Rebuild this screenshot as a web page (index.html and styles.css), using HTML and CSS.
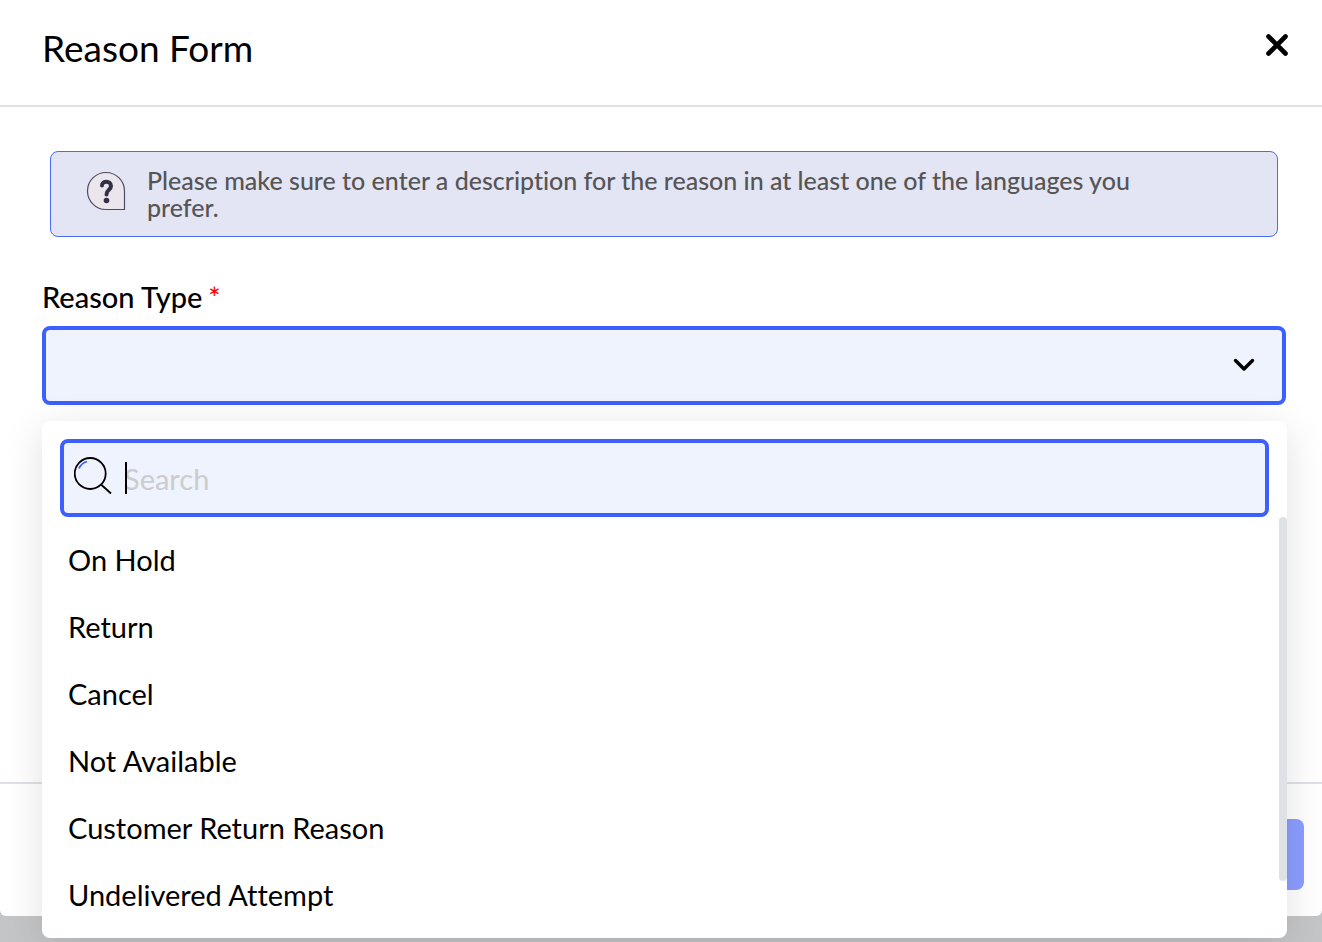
FILE: index.html
```html
<!DOCTYPE html>
<html lang="en">
<head>
    <meta charset="UTF-8">
    <meta name="viewport" content="width=device-width, initial-scale=1.0">
    <title>Reason Form</title>
    <link rel="stylesheet" href="styles.css">
</head>
<body>
    <form class="modal">
        <header class="modal-header">
            <h2>Reason Form</h2>
            <button type="button" class="close-btn" aria-label="Close">
                <svg width="22" height="22" viewBox="0 0 22 22"><path d="M2.5 2.5L19.5 19.5M19.5 2.5L2.5 19.5"/></svg>
            </button>
        </header>

        <div class="modal-body">
            <div class="notice">
                <svg class="notice-icon" width="40" height="40" viewBox="0 0 40 40">
                    <path class="bubble" d="M20 1.500A18.500 18.500 0 1 0 20 38.500H38.500V20A18.500 18.500 0 0 0 20 1.500Z"/>
                    <path class="mark" d="M16 14.500C16 9.500 25 9.500 25 15C25 19 20.500 18.500 20.500 23.500"/>
                    <circle cx="20.500" cy="29.500" r="2.800"/>
                </svg>
                <p>Please make sure to enter a description for the reason in at least one of the languages you prefer.</p>
            </div>

            <div class="input-group">
                <label for="reasonType">Reason Type<span class="required">*</span></label>
                <div class="select-wrap">
                    <select id="reasonType" name="reasonType" required></select>
                    <svg class="chevron" width="22" height="14" viewBox="0 0 22 14"><path d="M2.500 2.500L11 11L19.500 2.500"/></svg>

                    <div class="dropdown">
                        <div class="search-box">
                            <svg width="38" height="38" viewBox="0 0 38 38">
                                <circle cx="16.200" cy="16.500" r="15.500"/>
                                <path d="M27 27.500L37 36.500"/>
                                <path class="shine" d="M5 11.500C6.500 8 9 5.500 13 4.500"/>
                            </svg>
                            <div class="search-field">
                                <input type="text" placeholder="Search" aria-label="Search">
                                <span class="caret"></span>
                            </div>
                        </div>
                        <div class="options">
                            <ul>
                                <li><button type="button">On Hold</button></li>
                                <li><button type="button">Return</button></li>
                                <li><button type="button">Cancel</button></li>
                                <li><button type="button">Not Available</button></li>
                                <li><button type="button">Customer Return Reason</button></li>
                                <li><button type="button">Undelivered Attempt</button></li>
                            </ul>
                            <span class="scroll-thumb"></span>
                        </div>
                    </div>
                </div>
            </div>
        </div>

        <footer class="modal-footer">
            <button type="submit" class="save-btn" aria-label="Save"></button>
        </footer>
    </form>
</body>
</html>
```

FILE: styles.css
```css
* {
    box-sizing: border-box;
}
body {
    margin: 0;
    min-height: 100vh;
    padding-bottom: 26px;
    display: flex;
    flex-direction: column;
    overflow: hidden;
    font-family: Lato, "Open Sans", sans-serif;
    font-size: 29px;
    font-variant-ligatures: none;
    color: #000;
    background: #c4c5c7;
}
button, input, select {
    font: inherit;
    font-variant-ligatures: none;
    color: inherit;
}
.modal {
    flex: 1;
    display: flex;
    flex-direction: column;
    background: #fff;
    border-radius: 0 0 6px 6px;
}
.modal-header {
    display: flex;
    justify-content: space-between;
    align-items: flex-start;
    padding: 26px 34px 35px 42px;
    border-bottom: 2px solid #dee2e6;
}
.modal-header h2 {
    margin: 0;
    font-size: 37px;
    font-weight: 400;
    line-height: 44px;
}
.close-btn {
    display: flex;
    margin-top: 8px;
    padding: 0;
    border: none;
    background: none;
    cursor: pointer;
}
.close-btn svg {
    fill: none;
    stroke: #000;
    stroke-width: 4.6;
    stroke-linecap: round;
}
.modal-body {
    flex: 1;
    padding: 44px 36px 44px 42px;
}
.notice {
    display: flex;
    align-items: flex-start;
    gap: 21px;
    margin: 0 8px 44px;
    padding: 15px 100px 15px 35px;
    border: 1px solid #4a6cf7;
    border-radius: 8px;
    background: #e4e5f4;
    color: #555;
}
.notice p {
    margin: 0;
    font-size: 25px;
    font-weight: 500;
    line-height: 27px;
}
.notice-icon {
    flex: none;
    margin-top: 4px;
    fill: #35304a;
}
.notice-icon .bubble {
    fill: #ebe5ec;
    stroke: #4d4a66;
    stroke-width: 1.2;
}
.notice-icon .mark {
    fill: none;
    stroke: #35304a;
    stroke-width: 4;
    stroke-linecap: round;
}
.input-group label {
    display: block;
    margin-bottom: 13px;
    font-weight: 500;
    line-height: 32px;
}
.required {
    margin-left: 6px;
    color: #f00;
}
.select-wrap {
    position: relative;
}
.select-wrap select {
    display: block;
    width: 100%;
    height: 79px;
    padding: 0 60px 0 20px;
    border: 4px solid #3d5fff;
    border-radius: 8px;
    background: #eff3fd;
    appearance: none;
    outline: none;
}
.chevron {
    position: absolute;
    top: 32px;
    right: 31px;
    fill: none;
    stroke: #000;
    stroke-width: 3.4;
    stroke-linecap: round;
    stroke-linejoin: round;
    pointer-events: none;
}
.dropdown {
    position: absolute;
    top: 95px;
    left: 0;
    right: -1px;
    padding-top: 18px;
    border-radius: 8px;
    background: #fff;
    box-shadow: 0 8px 40px rgba(0, 0, 0, 0.12);
}
.search-box {
    display: flex;
    align-items: center;
    gap: 12px;
    height: 78px;
    margin: 0 18px;
    padding: 0 10px;
    border: 4px solid #3d5fff;
    border-radius: 8px;
    background: #eff3fd;
}
.search-box svg {
    flex: none;
    margin-bottom: 4px;
    fill: none;
    stroke: #000;
    stroke-width: 1.8;
}
.search-box .shine {
    stroke: #3d5fff;
}
.search-field {
    position: relative;
    flex: 1;
}
.search-field input {
    display: block;
    width: 100%;
    height: 32px;
    padding: 0;
    border: none;
    outline: none;
    background: none;
}
.search-field input::placeholder {
    color: #ccc;
    opacity: 1;
}
.caret {
    position: absolute;
    top: 0;
    left: 1px;
    width: 2px;
    height: 100%;
    background: #000;
}
.options {
    position: relative;
}
.options ul {
    margin: 0;
    padding: 9px 0 10px;
    list-style: none;
}
.options button {
    display: block;
    width: 100%;
    padding: 0 26px;
    border: none;
    background: none;
    line-height: 67px;
    text-align: left;
    cursor: pointer;
}
.scroll-thumb {
    position: absolute;
    top: 0;
    right: 0;
    width: 8px;
    height: 364px;
    border-radius: 4px;
    background: #dee2e6;
}
.modal-footer {
    display: flex;
    justify-content: flex-end;
    padding: 35px 18px 26px;
    border-top: 2px solid #dee2e6;
}
.save-btn {
    width: 150px;
    height: 71px;
    border: none;
    border-radius: 8px;
    background: #8b9dff;
}
```
